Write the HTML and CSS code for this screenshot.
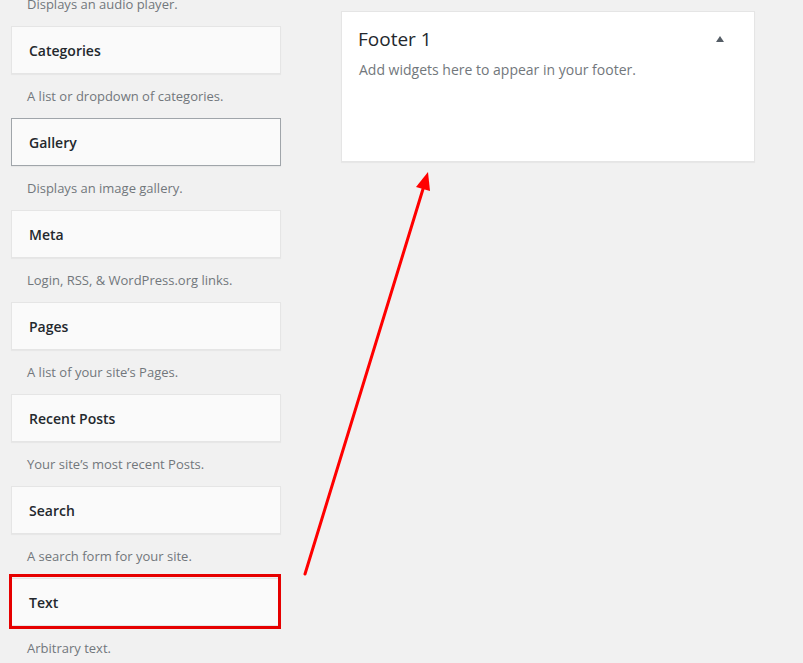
FILE: index.html
```html
<!DOCTYPE html>
<html>
<head>
<meta charset="utf-8">
<link rel="stylesheet" href="styles.css">
</head>
<body>
<div class="page">
  <div class="widgets">
    <p class="desc">Displays an audio player.</p>
    <div class="widget"><h3>Categories</h3></div>
    <p class="desc">A list or dropdown of categories.</p>
    <div class="widget hover"><h3>Gallery</h3></div>
    <p class="desc">Displays an image gallery.</p>
    <div class="widget"><h3>Meta</h3></div>
    <p class="desc">Login, RSS, &amp; WordPress.org links.</p>
    <div class="widget"><h3>Pages</h3></div>
    <p class="desc">A list of your site’s Pages.</p>
    <div class="widget"><h3>Recent Posts</h3></div>
    <p class="desc">Your site’s most recent Posts.</p>
    <div class="widget"><h3>Search</h3></div>
    <p class="desc">A search form for your site.</p>
    <div class="widget"><h3>Text</h3></div>
    <p class="desc">Arbitrary text.</p>
  </div>
  <div class="sidebars">
    <div class="sidebar">
      <div class="sidebar-head">
        <h2>Footer 1</h2>
        <span class="toggle"></span>
      </div>
      <p class="sidebar-desc">Add widgets here to appear in your footer.</p>
    </div>
  </div>
</div>
<div class="highlight"></div>
<svg class="arrow" width="803" height="663" viewBox="0 0 803 663">
  <line x1="305" y1="574" x2="423" y2="189" stroke="#ff0000" stroke-width="3" stroke-linecap="round"/>
  <polygon points="428,172 430,191 416,187" fill="#ff0000"/>
</svg>
</body>
</html>
```
FILE: styles.css
```css
html, body {
  margin: 0;
  padding: 0;
  background: #f1f1f1;
  width: 803px;
  height: 663px;
  overflow: hidden;
  font-family: "Open Sans", "Noto Sans", sans-serif;
}
.page {
  display: flex;
  align-items: flex-start;
}
.widgets {
  width: 270px;
  margin: -18px 0 0 11px;
  display: flex;
  flex-direction: column;
}
.desc {
  margin: 0;
  height: 44px;
  box-sizing: border-box;
  padding: 14px 0 0 16px;
  font-size: 13px;
  line-height: 16px;
  color: #72777c;
}
.widget {
  height: 48px;
  box-sizing: border-box;
  background: #fafafa;
  border: 1px solid #e5e5e5;
  box-shadow: 0 1px 1px rgba(0,0,0,0.04);
  display: flex;
  align-items: center;
  padding-left: 17px;
}
.widget.hover {
  border-color: #a0a5aa;
}
.widget h3 {
  margin: 0;
  font-size: 14px;
  font-weight: 600;
  color: #23282d;
}
.sidebars {
  margin: 11px 0 0 60px;
}
.sidebar {
  width: 414px;
  height: 151px;
  box-sizing: border-box;
  background: #fff;
  border: 1px solid #e5e5e5;
  box-shadow: 0 1px 1px rgba(0,0,0,0.04);
  padding: 14px 0 0 16px;
}
.sidebar-head {
  display: flex;
  align-items: center;
  justify-content: space-between;
  padding-right: 30px;
}
.sidebar-head h2 {
  margin: 0;
  font-size: 19px;
  font-weight: 400;
  line-height: 26px;
  color: #23282d;
}
.toggle {
  width: 0;
  height: 0;
  border-left: 4.5px solid transparent;
  border-right: 4.5px solid transparent;
  border-bottom: 6px solid #555d66;
}
.sidebar-desc {
  margin: 9px 0 0 1px;
  font-size: 14px;
  line-height: 18px;
  color: #72777c;
}
.highlight {
  position: absolute;
  left: 9px;
  top: 574px;
  width: 272px;
  height: 55px;
  box-sizing: border-box;
  border: 3px solid #e60000;
}
.arrow {
  position: absolute;
  left: 0;
  top: 0;
  pointer-events: none;
}
```
